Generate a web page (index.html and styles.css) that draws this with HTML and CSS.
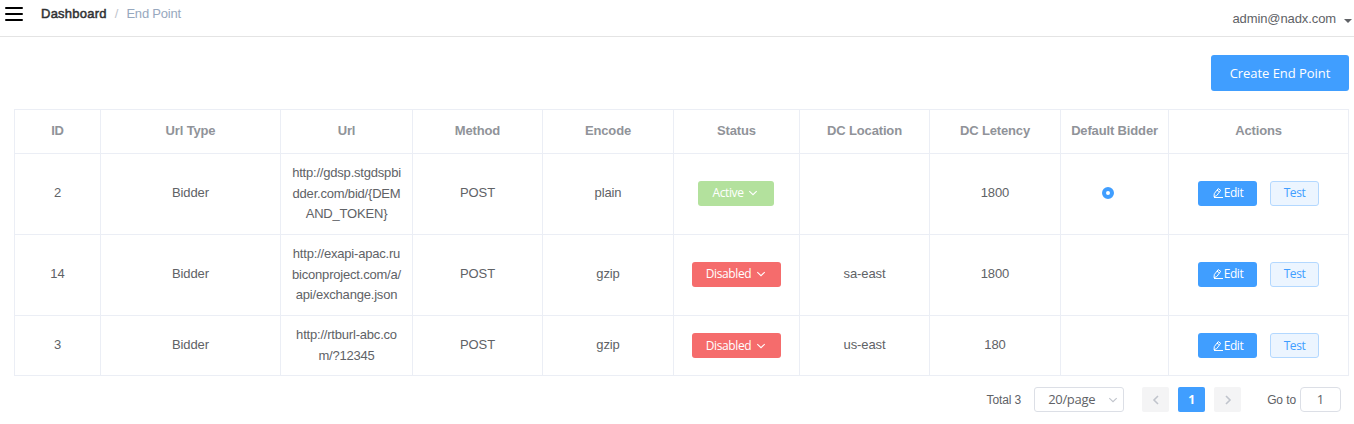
FILE: index.html
```
<!DOCTYPE html>
<html lang="en">
<head>
	<meta charset="UTF-8">
	<title>End Point</title>
	<link rel="stylesheet" href="styles.css">
</head>
<body>
	<svg class="sprite" width="0" height="0">
		<symbol id="arrow-down" viewBox="0 0 12 12"><path d="M2.300 4.200L6 7.700l3.700-3.500" fill="none" stroke="currentColor" stroke-width="1.100"/></symbol>
		<symbol id="arrow-left" viewBox="0 0 12 12"><path d="M8 2L4 6l4 4" fill="none" stroke="currentColor" stroke-width="1.6"/></symbol>
		<symbol id="arrow-right" viewBox="0 0 12 12"><path d="M4 2l4 4-4 4" fill="none" stroke="currentColor" stroke-width="1.6"/></symbol>
		<symbol id="pen" viewBox="0 0 12 12"><path d="M2 9.800l.3-3.200L6.200 1.600l2.500 1.700-3.900 5.200L2 9.800zM5 3.200l2.500 1.700M2 10.500h9" fill="none" stroke="currentColor" stroke-width="1"/></symbol>
	</svg>

	<header class="navbar">
		<svg class="hamburger" width="18" height="14" viewBox="0 0 18 14"><path d="M1 1h16M1 7h16M1 13h16" stroke="#000" stroke-width="2" stroke-linecap="round"/></svg>
		<nav class="breadcrumb">
			<a class="crumb">Dashboard</a>
			<span class="separator">/</span>
			<span class="current">End Point</span>
		</nav>
		<div class="user">admin@nadx.com<i class="caret"></i></div>
	</header>

	<main class="app-container">
		<div class="toolbar">
			<button class="btn btn-create">Create End Point</button>
		</div>

		<table class="table">
			<colgroup>
				<col class="col-id"><col class="col-type"><col class="col-url"><col class="col-method"><col class="col-encode">
				<col class="col-status"><col class="col-location"><col class="col-latency"><col class="col-default"><col class="col-actions">
			</colgroup>
			<thead>
				<tr>
					<th>ID</th>
					<th>Url Type</th>
					<th>Url</th>
					<th>Method</th>
					<th>Encode</th>
					<th>Status</th>
					<th>DC Location</th>
					<th>DC Letency</th>
					<th>Default Bidder</th>
					<th>Actions</th>
				</tr>
			</thead>
			<tbody>
				<tr class="row-tall">
					<td>2</td>
					<td>Bidder</td>
					<td class="url">http://gdsp.stgdspbidder.com/bid/{DEMAND_TOKEN}</td>
					<td>POST</td>
					<td>plain</td>
					<td><button class="btn btn-status active">Active<svg class="icon"><use href="#arrow-down"/></svg></button></td>
					<td></td>
					<td>1800</td>
					<td><span class="radio"></span></td>
					<td><div class="actions"><button class="btn btn-edit"><svg class="icon"><use href="#pen"/></svg>Edit</button><button class="btn btn-test">Test</button></div></td>
				</tr>
				<tr class="row-tall">
					<td>14</td>
					<td>Bidder</td>
					<td class="url">http://exapi-apac.rubiconproject.com/a/api/exchange.json</td>
					<td>POST</td>
					<td>gzip</td>
					<td><button class="btn btn-status disabled">Disabled<svg class="icon"><use href="#arrow-down"/></svg></button></td>
					<td>sa-east</td>
					<td>1800</td>
					<td></td>
					<td><div class="actions"><button class="btn btn-edit"><svg class="icon"><use href="#pen"/></svg>Edit</button><button class="btn btn-test">Test</button></div></td>
				</tr>
				<tr class="row-short">
					<td>3</td>
					<td>Bidder</td>
					<td class="url">http://rtburl-abc.com/?12345</td>
					<td>POST</td>
					<td>gzip</td>
					<td class="cell-button"><button class="btn btn-status disabled">Disabled<svg class="icon"><use href="#arrow-down"/></svg></button></td>
					<td>us-east</td>
					<td>180</td>
					<td></td>
					<td class="cell-button"><div class="actions"><button class="btn btn-edit"><svg class="icon"><use href="#pen"/></svg>Edit</button><button class="btn btn-test">Test</button></div></td>
				</tr>
			</tbody>
		</table>

		<div class="pagination">
			<span class="total">Total 3</span>
			<div class="page-size"><span>20/page</span><svg class="icon"><use href="#arrow-down"/></svg></div>
			<div class="pager">
				<button class="page"><svg class="icon"><use href="#arrow-left"/></svg></button>
				<button class="page current-page">1</button>
				<button class="page"><svg class="icon"><use href="#arrow-right"/></svg></button>
			</div>
			<span class="goto">Go to</span>
			<div class="goto-input">1</div>
		</div>
	</main>
</body>
</html>
```
FILE: styles.css
```
* {
	box-sizing: border-box;
}
body {
	margin: 0;
	background: #fff;
	color: #606266;
	font: 13px/20px "Liberation Sans", Arial, sans-serif;
	letter-spacing: -0.1px;
}
button {
	margin: 0;
	padding: 0;
	border: 0;
}
.sprite {
	display: block;
}
.icon {
	width: 12px;
	height: 12px;
	flex: none;
}

/* top bar */
.navbar {
	display: flex;
	align-items: flex-start;
	height: 37px;
	padding: 0 2px 0 5px;
	border-bottom: 1px solid #e4e4e4;
}
.hamburger {
	margin: 7px 18px 0 0;
}
.breadcrumb {
	display: flex;
	gap: 8px;
	margin-top: 4px;
}
.crumb {
	color: #303133;
	letter-spacing: 0.25px;
	-webkit-text-stroke: 0.5px #303133;
}
.separator {
	color: #c0c4cc;
}
.current {
	color: #97a8be;
	letter-spacing: -0.2px;
}
.user {
	display: flex;
	align-items: center;
	margin: 9px 0 0 auto;
}
.caret {
	margin: 3px 0 0 8px;
	border: 4px solid transparent;
	border-top: 4px solid #606266;
	border-bottom: 0;
}

/* buttons */
.toolbar {
	display: flex;
	justify-content: flex-end;
	padding: 18px 5px 18px 0;
}
.btn {
	display: inline-flex;
	align-items: center;
	justify-content: center;
	height: 25px;
	border-radius: 3px;
	color: #fff;
	font: 500 12px/1 "Open Sans", "Noto Sans", sans-serif;
	letter-spacing: -0.4px;
	vertical-align: middle;
}
.btn-create {
	width: 138px;
	height: 36px;
	background: #409eff;
	font-size: 13px;
	letter-spacing: -0.05px;
}
.btn-status {
	display: flex;
	gap: 4px;
	margin: 0 auto;
}
.active {
	width: 76px;
	margin-left: 14px;
	background: #b3e19d;
}
.disabled {
	width: 89px;
	background: #f56c6c;
}
.actions {
	display: flex;
	justify-content: center;
	gap: 13px;
}
.btn-edit {
	width: 59px;
	background: #409eff;
}
.btn-test {
	width: 49px;
	border: 1px solid #b3d8ff;
	background: #ecf5ff;
	color: #409eff;
	font-weight: 400;
	letter-spacing: -0.4px;
}

/* end point table */
.table {
	width: 1335px;
	margin-left: 14px;
	border: 1px solid #ebeef5;
	border-width: 1px 0 0 1px;
	border-spacing: 0;
	table-layout: fixed;
	text-align: center;
}
.table th,
.table td {
	padding: 0 10px 2px;
	border: 1px solid #ebeef5;
	border-width: 0 1px 1px 0;
	vertical-align: middle;
}
.table th {
	height: 44px;
	padding: 0 0 2px;
	color: #909399;
	letter-spacing: -0.15px;
	white-space: nowrap;
}
.row-tall td {
	height: 81px;
}
.row-short td {
	height: 60px;
}
.table .cell-button {
	padding-bottom: 0;
}
.table .url {
	padding-bottom: 0;
	letter-spacing: -0.2px;
	line-height: 20.4px;
	word-break: break-all;
}
.col-id { width: 86px; }
.col-type { width: 180px; }
.col-url { width: 132px; }
.col-method { width: 130px; }
.col-encode { width: 131px; }
.col-status { width: 126px; }
.col-location { width: 130px; }
.col-latency { width: 131px; }
.col-default { width: 108px; }
.col-actions { width: 180px; }

.radio {
	display: block;
	width: 12px;
	height: 12px;
	margin-left: 31px;
	border: 4px solid #409eff;
	border-radius: 50%;
	background: #fff;
}

/* pagination */
.pagination {
	display: flex;
	align-items: center;
	height: 25px;
	margin: 11px 13px 0 0;
	justify-content: flex-end;
	font-size: 12px;
}
.page-size {
	display: flex;
	align-items: center;
	justify-content: space-between;
	width: 90px;
	height: 25px;
	margin-left: 13px;
	padding: 0 4px 0 13px;
	border: 1px solid #dcdfe6;
	border-radius: 3px;
	font: 13px/1 "Open Sans", "Noto Sans", sans-serif;
	letter-spacing: -0.3px;
}
.page-size .icon {
	color: #c0c4cc;
}
.pager {
	display: flex;
	gap: 9px;
	margin: 0 26px 0 18px;
}
.page {
	display: flex;
	align-items: center;
	justify-content: center;
	width: 27px;
	height: 25px;
	border-radius: 2px;
	background: #f4f4f5;
	color: #c0c4cc;
	font: bold 12px/1 "Open Sans", "Noto Sans", sans-serif;
}
.current-page {
	background: #409eff;
	color: #fff;
}
.goto {
	padding-top: 1px;
}
.goto-input {
	width: 41px;
	height: 25px;
	margin-left: 4px;
	border: 1px solid #dcdfe6;
	border-radius: 4px;
	font: 13px/23px "Open Sans", "Noto Sans", sans-serif;
	text-align: center;
}
```
